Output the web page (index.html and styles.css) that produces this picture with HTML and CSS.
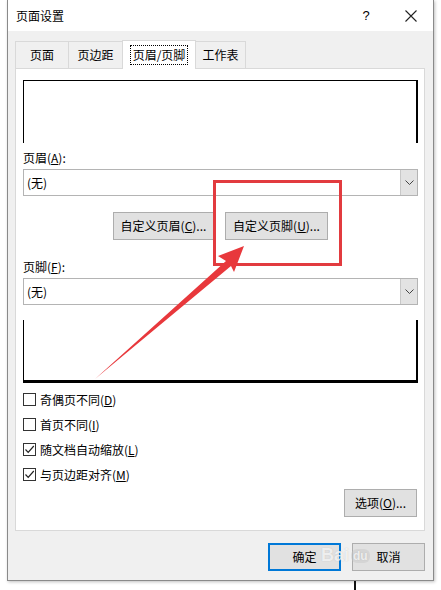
FILE: index.html
```html
<!DOCTYPE html>
<html lang="zh-CN">
<head>
<meta charset="utf-8">
<title>页面设置</title>
<link rel="stylesheet" href="styles.css">
</head>
<body>
<div class="screen">
  <div class="dialog">
    <div class="titlebar">
      <span class="title">页面设置</span>
      <span class="help">?</span>
      <span class="close">
        <svg width="12" height="12" viewBox="0 0 12 12"><path d="M0.5 0.5 L11.5 11.5 M11.5 0.5 L0.5 11.5" stroke="#222" stroke-width="1.1" fill="none"/></svg>
      </span>
    </div>
    <div class="body">
      <div class="tabs">
        <div class="tab t1">页面</div>
        <div class="tab t2">页边距</div>
        <div class="tab t3 active"><span class="focus">页眉/页脚</span></div>
        <div class="tab t4">工作表</div>
      </div>
      <div class="panel">
        <div class="preview preview-head"></div>
        <div class="field-label">页眉(<u>A</u>):</div>
        <div class="select">
          <span class="select-value">(无)</span>
          <span class="select-btn"><svg width="9" height="5" viewBox="0 0 9 5"><path d="M0.5 0.5 L4.5 4.5 L8.5 0.5" stroke="#444" stroke-width="1" fill="none"/></svg></span>
        </div>
        <div class="btn-row">
          <div class="btn w101">自定义页眉(<u>C</u>)...</div>
          <div class="btn w103">自定义页脚(<u>U</u>)...</div>
        </div>
        <div class="field-label tall">页脚(<u>F</u>):</div>
        <div class="select">
          <span class="select-value">(无)</span>
          <span class="select-btn"><svg width="9" height="5" viewBox="0 0 9 5"><path d="M0.5 0.5 L4.5 4.5 L8.5 0.5" stroke="#444" stroke-width="1" fill="none"/></svg></span>
        </div>
        <div class="preview preview-foot"></div>
        <div class="checks">
          <div class="check"><span class="box"></span><span>奇偶页不同(<u>D</u>)</span></div>
          <div class="check"><span class="box"></span><span>首页不同(<u>I</u>)</span></div>
          <div class="check"><span class="box"><svg width="11" height="11" viewBox="0 0 11 11"><path d="M1.5 5.5 L4.2 8.3 L9.8 2" stroke="#222" stroke-width="1.2" fill="none"/></svg></span><span>随文档自动缩放(<u>L</u>)</span></div>
          <div class="check"><span class="box"><svg width="11" height="11" viewBox="0 0 11 11"><path d="M1.5 5.5 L4.2 8.3 L9.8 2" stroke="#222" stroke-width="1.2" fill="none"/></svg></span><span>与页边距对齐(<u>M</u>)</span></div>
        </div>
        <div class="opt-row">
          <div class="btn w73">选项(<u>O</u>)...</div>
        </div>
      </div>
      <div class="actions">
        <div class="btn w73 primary">确定</div>
        <div class="btn w73">取消</div>
      </div>
    </div>
  </div>
  <div class="backdrop-line"></div>
  <div class="watermark"><span class="wm-bai">Bai</span><span class="wm-du">du</span></div>
  <svg class="annotation" width="441" height="590" viewBox="0 0 441 590">
    <rect x="214.5" y="181.5" width="126" height="83" fill="none" stroke="#e23b3f" stroke-width="3"/>
    <polygon points="244,246 218,256 226,261 95,379 231,266 234,272" fill="#e8383c"/>
  </svg>
</div>
</body>
</html>
```
FILE: styles.css
```css
* { box-sizing: border-box; }
html, body { margin: 0; padding: 0; background: #ffffff; }
body {
  font-family: "Noto Sans CJK SC", "Noto Sans", "Liberation Sans", sans-serif;
  font-size: 12px;
  color: #000;
}
u { text-decoration: underline; text-underline-offset: 1px; }

.screen {
  position: relative;
  width: 441px;
  height: 590px;
  overflow: hidden;
  background: #fff;
}

.dialog {
  margin-left: 7px;
  width: 427px;
  height: 581px;
  border: 1px solid #8a8a8a;
  border-top: none;
  display: flex;
  flex-direction: column;
  box-shadow: 1px 1px 3px rgba(0,0,0,0.25);
  background: #f0f0f0;
}

.titlebar {
  height: 31px;
  background: #fff;
  display: flex;
  align-items: center;
  padding-left: 8px;
}
.title { flex: 1; line-height: 16px; padding-top: 1px; }
.help {
  font-family: "Liberation Sans", sans-serif;
  font-size: 13px;
  width: 12px;
  margin-right: 33px;
  text-align: center;
}
.close {
  width: 12px;
  height: 12px;
  margin-right: 16px;
  display: flex;
}

.body {
  flex: 1;
  padding: 10px 8px 0 7px;
  display: flex;
  flex-direction: column;
}

.tabs {
  display: flex;
  align-items: flex-end;
  height: 27px;
}
.tab {
  height: 27px;
  border: 1px solid #d9d9d9;
  border-bottom: none;
  display: flex;
  align-items: center;
  justify-content: center;
  background: #f0f0f0;
  margin-right: -1px;
  line-height: 16px;
}
.t1 { width: 54px; }
.t2 { width: 55px; }
.t3 { width: 74px; }
.t4 { width: 51px; }
.tab.active {
  height: 29px;
  background: #fff;
  margin-bottom: -1px;
  position: relative;
  z-index: 1;
}
.focus {
  border: 1px dotted #000;
  padding: 1px 2px;
  line-height: 16px;
}

.panel {
  height: 463px;
  border: 1px solid #d9d9d9;
  background: #fff;
  padding: 0 6px 0 7px;
  display: flex;
  flex-direction: column;
}

.preview {
  height: 63px;
  border-left: 1px solid #000;
  border-right: 2px solid #000;
}
.preview-head {
  margin-top: 11px;
  border-top: 1px solid #000;
}
.preview-foot {
  margin-top: 15px;
  border-bottom: 3px solid #000;
}

.field-label {
  height: 26px;
  display: flex;
  align-items: flex-end;
  padding-bottom: 3px;
  line-height: 16px;
}
.field-label.tall { height: 38px; }

.select {
  height: 27px;
  border: 1px solid #b4b4b4;
  display: flex;
  align-items: stretch;
  background: #fff;
}
.select-value {
  flex: 1;
  display: flex;
  align-items: center;
  padding-left: 3px;
  line-height: 16px;
}
.select-btn {
  width: 17px;
  background: #e3e3e3;
  border-left: 1px solid #c8c8c8;
  display: flex;
  align-items: center;
  justify-content: center;
}

.btn-row {
  margin-top: 16px;
  display: flex;
  justify-content: center;
  gap: 11px;
}
.btn {
  height: 28px;
  background: #e1e1e1;
  border: 1px solid #adadad;
  display: flex;
  align-items: center;
  justify-content: center;
  line-height: 16px;
  white-space: nowrap;
}
.w101 { width: 101px; }
.w103 { width: 103px; }
.w73 { width: 73px; }
.btn.primary { border: 2px solid #0078d7; }

.checks {
  margin-top: 4px;
  display: flex;
  flex-direction: column;
}
.check {
  height: 25px;
  display: flex;
  align-items: center;
  gap: 4px;
  line-height: 16px;
}
.box {
  width: 13px;
  height: 13px;
  border: 1px solid #333;
  background: #fff;
  display: flex;
  align-items: center;
  justify-content: center;
}

.opt-row {
  margin-top: 2px;
  display: flex;
  justify-content: flex-end;
  padding-right: 1px;
}

.actions {
  margin-top: 12px;
  display: flex;
  justify-content: flex-end;
  gap: 11px;
  padding-right: 0;
}

.backdrop-line {
  position: absolute;
  left: 354px;
  top: 581px;
  width: 2px;
  height: 9px;
  background: #111;
}

.watermark {
  position: absolute;
  left: 321px;
  top: 545px;
  display: flex;
  align-items: center;
  gap: 2px;
  color: rgba(255,255,255,0.75);
  font-family: "Liberation Sans", sans-serif;
  font-weight: bold;
  font-size: 18px;
  text-shadow: 0 0 1px rgba(150,150,150,0.5);
  pointer-events: none;
}
.wm-du {
  font-size: 12px;
  line-height: 14px;
  background: rgba(200,200,200,0.45);
  border-radius: 6px;
  padding: 0 2px;
}

.annotation {
  position: absolute;
  left: 0;
  top: 0;
  pointer-events: none;
}
```
